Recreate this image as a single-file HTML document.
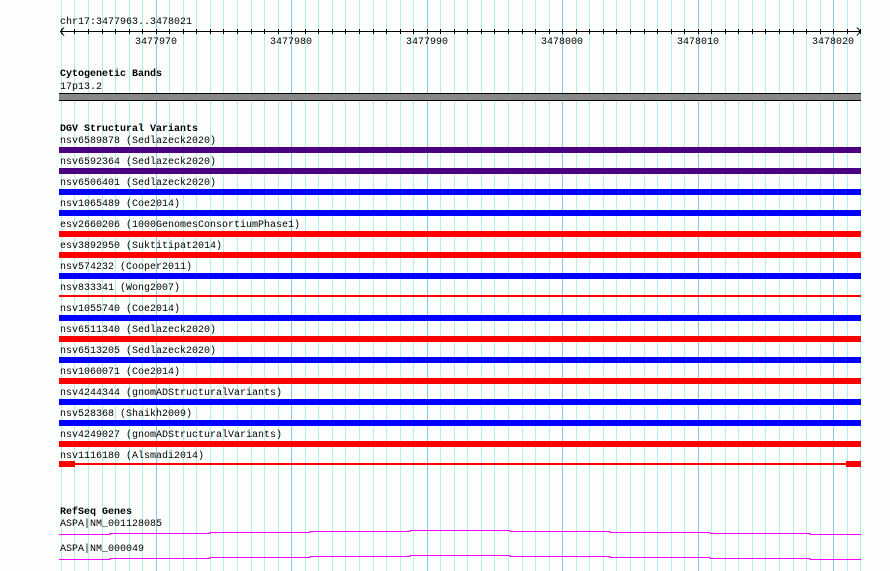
<!DOCTYPE html>
<html><head><meta charset="utf-8"><style>
html,body{margin:0;padding:0;background:#fcfffc;width:890px;height:571px;overflow:hidden}
svg{display:block}
text{font-family:"Liberation Mono",monospace;font-size:10px;fill:#000}
.b{font-weight:bold}
</style></head><body>
<svg width="890" height="571" viewBox="0 0 890 571" xmlns="http://www.w3.org/2000/svg">
<g id="grid" shape-rendering="crispEdges"></g>
<g shape-rendering="crispEdges">
<line x1="60" y1="31.5" x2="861" y2="31.5" stroke="#000"/>
<path d="M64 27.5 L60.5 31.5 L64 35.5 M857 27.5 L860.5 31.5 L857 35.5" stroke="#000" fill="none"/>
<g id="ticks"></g>
<rect x="59" y="93" width="802" height="8" fill="#000"/>
<rect x="59" y="94" width="802" height="6" fill="#888"/>
<g id="bars"></g>
<rect x="59" y="295" width="802" height="2" fill="#f00"/>
<rect x="59" y="463" width="802" height="2" fill="#f00"/>
<rect x="59" y="461" width="16" height="6" fill="#f00"/>
<rect x="846" y="461" width="15" height="6" fill="#f00"/>
<path d="M59 534.5H110V533.5H210V532.5H310V531.5H410V530.5H510V531.5H610V532.5H710V533.5H810V534.5H861" stroke="#f0f" fill="none"/>
<path d="M59 559.5H110V558.5H210V557.5H310V556.5H410V555.5H510V556.5H610V557.5H710V558.5H810V559.5H861" stroke="#f0f" fill="none"/>
</g>
<text x="60" y="24">chr17:3477963..3478021</text>
<text x="135" y="44">3477970</text>
<text x="270" y="44">3477980</text>
<text x="406" y="44">3477990</text>
<text x="541" y="44">3478000</text>
<text x="677" y="44">3478010</text>
<text x="812" y="44">3478020</text>
<text x="60" y="76" class="b">Cytogenetic Bands</text>
<text x="60" y="89">17p13.2</text>
<text x="60" y="131" class="b">DGV Structural Variants</text>
<g id="labels"></g>
<text x="60" y="514" class="b">RefSeq Genes</text>
<text x="60" y="526">ASPA|NM_001128085</text>
<text x="60" y="551">ASPA|NM_000049</text>
</svg>
<script>
var NS="http://www.w3.org/2000/svg";
function el(p,t,a,txt){var e=document.createElementNS(NS,t);for(var k in a)e.setAttribute(k,a[k]);if(txt)e.textContent=txt;document.getElementById(p).appendChild(e);}
for(var k=0;k<60;k++){var x=Math.round(60.85+13.55*k)+0.5;var dark=(k%10==7);
el("grid","line",{x1:x,y1:0,x2:x,y2:571,stroke:dark?"#8cc4ec":"#b0eef0"});
el("ticks","line",{x1:x,y1:29,x2:x,y2:34,stroke:"#000"});}
var rows=[["nsv6589878 (Sedlazeck2020)","#4b0082"],["nsv6592364 (Sedlazeck2020)","#4b0082"],["nsv6506401 (Sedlazeck2020)","#0000ff"],["nsv1065489 (Coe2014)","#0000ff"],["esv2660206 (1000GenomesConsortiumPhase1)","#ff0000"],["esv3892950 (Suktitipat2014)","#ff0000"],["nsv574232 (Cooper2011)","#0000ff"],["nsv833341 (Wong2007)",null],["nsv1055740 (Coe2014)","#0000ff"],["nsv6511340 (Sedlazeck2020)","#ff0000"],["nsv6513205 (Sedlazeck2020)","#0000ff"],["nsv1060071 (Coe2014)","#ff0000"],["nsv4244344 (gnomADStructuralVariants)","#0000ff"],["nsv528368 (Shaikh2009)","#0000ff"],["nsv4249027 (gnomADStructuralVariants)","#ff0000"],["nsv1116180 (Alsmadi2014)",null]];
rows.forEach(function(r,i){el("labels","text",{x:60,y:143+21*i},r[0]);if(r[1])el("bars","rect",{x:59,y:147+21*i,width:802,height:6,fill:r[1]});});
</script>
</body></html>
